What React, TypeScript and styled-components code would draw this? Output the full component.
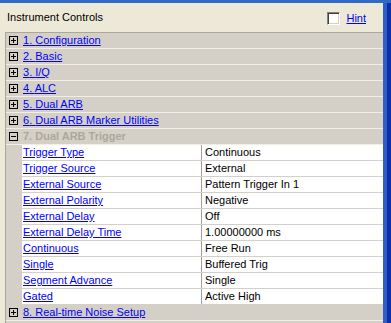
import styled, { createGlobalStyle } from 'styled-components';

const GlobalStyle = createGlobalStyle`
    html, body {
        margin: 0;
        padding: 0;
        background: #ece9d8;
    }
    body {
        font-family: "Liberation Sans", Arial, sans-serif;
        font-size: 11px;
    }
`;

const sections = [
    { id: 1, title: 'Configuration' },
    { id: 2, title: 'Basic' },
    { id: 3, title: 'I/Q' },
    { id: 4, title: 'ALC' },
    { id: 5, title: 'Dual ARB' },
    { id: 6, title: 'Dual ARB Marker Utilities' },
];

const triggerRows = [
    ['Trigger Type', 'Continuous'],
    ['Trigger Source', 'External'],
    ['External Source', 'Pattern Trigger In 1'],
    ['External Polarity', 'Negative'],
    ['External Delay', 'Off'],
    ['External Delay Time', '1.00000000 ms'],
    ['Continuous', 'Free Run'],
    ['Single', 'Buffered Trig'],
    ['Segment Advance', 'Single'],
    ['Gated', 'Active High'],
];

export default function App() {
    return (
        <>
            <GlobalStyle />
            <Frame>
                <TopEdge />
                <Body>
                    <Content>
                        <TitleBar>
                            <Title>Instrument Controls</Title>
                            <HintBox>
                                <Checkbox />
                                <Link href="#">Hint</Link>
                            </HintBox>
                        </TitleBar>
                        <Panel>
                            {sections.map(s => (
                                <Section key={s.id} expanded={false}>
                                    <Link href="#">{s.id}. {s.title}</Link>
                                </Section>
                            ))}
                            <Section expanded>
                                <OpenTitle>7. Dual ARB Trigger</OpenTitle>
                            </Section>
                            {triggerRows.map(([name, value]) => (
                                <PropRow key={name}>
                                    <NameCell>
                                        <Link href="#">{name}</Link>
                                    </NameCell>
                                    <ValueCell>{value}</ValueCell>
                                </PropRow>
                            ))}
                            <Section expanded={false}>
                                <Link href="#">8. Real-time Noise Setup</Link>
                            </Section>
                        </Panel>
                    </Content>
                    <RightEdge />
                </Body>
            </Frame>
        </>
    );
}

const Section = ({ expanded, children }: { expanded: boolean; children: React.ReactNode }) => (
    <HeaderRow>
        <ToggleBox>
            <svg width="9" height="9" viewBox="0 0 9 9">
                <rect x="0.5" y="0.5" width="8" height="8" fill="none" stroke="#000" />
                <line x1="2" y1="4.5" x2="7" y2="4.5" stroke="#000" />
                {!expanded && <line x1="4.5" y1="2" x2="4.5" y2="7" stroke="#000" />}
            </svg>
        </ToggleBox>
        {children}
    </HeaderRow>
);

const Frame = styled.div`
    width: 391px;
    height: 323px;
    overflow: hidden;
    display: flex;
    flex-direction: column;
`;

const TopEdge = styled.div`
    height: 3px;
    background: #316ac5;
    flex-shrink: 0;
`;

const Body = styled.div`
    flex: 1;
    display: flex;
    min-height: 0;
`;

const Content = styled.div`
    flex: 1;
    display: flex;
    flex-direction: column;
    min-width: 0;
`;

const RightEdge = styled.div`
    width: 8px;
    flex-shrink: 0;
    background: linear-gradient(to right, #2d5fc4 0 4px, #0b2fa8 4px 8px);
`;

const TitleBar = styled.div`
    height: 29px;
    display: flex;
    align-items: center;
    justify-content: space-between;
    padding: 0 17px 0 7px;
    flex-shrink: 0;
`;

const Title = styled.span`
    color: #000;
    margin-top: -2px;
`;

const HintBox = styled.div`
    display: flex;
    align-items: center;
    gap: 6px;
    margin-top: 1px;
`;

const Checkbox = styled.span`
    box-sizing: border-box;
    width: 13px;
    height: 13px;
    background: #fff;
    border: 1px solid;
    border-color: #808080 #fff #fff #808080;
    box-shadow: inset 1px 1px 0 #404040, inset -1px -1px 0 #d4d0c8;
`;

const Link = styled.a`
    color: #0000ff;
    text-decoration: underline;
    white-space: nowrap;
`;

const Panel = styled.div`
    flex: 1;
    margin-left: 5px;
    background: #d4d0c8;
    border-top: 1px solid #aca899;
    border-left: 1px solid #aca899;
`;

const HeaderRow = styled.div`
    height: 15px;
    display: flex;
    align-items: center;
    border-bottom: 1px solid #f1efe2;
    line-height: 15px;
`;

const ToggleBox = styled.span`
    width: 17px;
    display: flex;
    align-items: center;
    padding-left: 3px;
    box-sizing: border-box;
    flex-shrink: 0;
`;

const OpenTitle = styled.span`
    color: #aca899;
    font-weight: bold;
`;

const PropRow = styled.div`
    height: 15px;
    margin-left: 16px;
    display: flex;
    background: #fff;
    border-bottom: 1px solid #d4d0c8;
    line-height: 15px;
`;

const NameCell = styled.div`
    width: 178px;
    padding-left: 1px;
    border-right: 1px solid #a0a0a0;
    overflow: hidden;
`;

const ValueCell = styled.div`
    flex: 1;
    padding-left: 3px;
    color: #000;
    white-space: nowrap;
`;
